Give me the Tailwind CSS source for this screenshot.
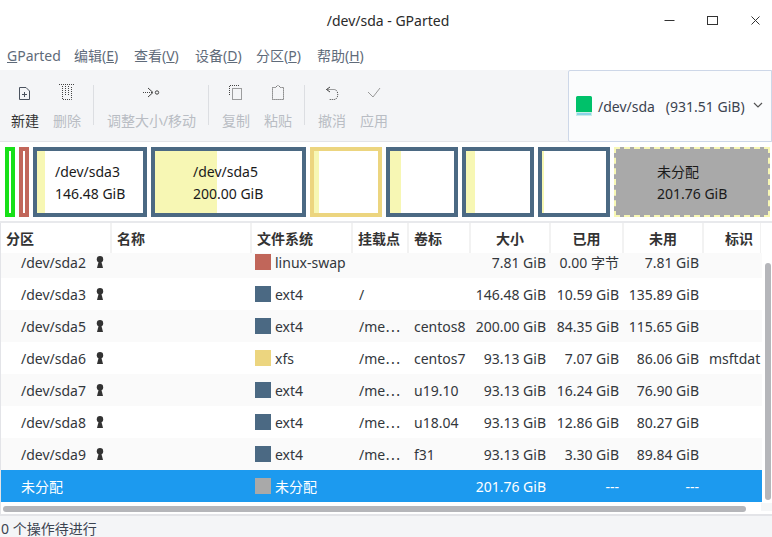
<!DOCTYPE html>
<html><head><meta charset="utf-8"><script src="https://cdn.jsdelivr.net/npm/@tailwindcss/browser@4"></script></head>
<body class="m-0 w-[772px] h-[537px] overflow-hidden bg-white text-[14px] text-[#33373c] font-['Noto_Sans','Noto_Sans_CJK_SC',sans-serif]">
<div class="flex flex-col h-[537px]">
 <div class="relative h-[38px] flex items-center justify-center pt-[3px] pl-[4px] text-[#2a2a2a]">/dev/sda - GParted
  <div class="absolute right-[11px] top-[15px] flex gap-[32px] items-center">
   <svg class="w-[11px] h-[11px]" viewBox="0 0 11 11"><path d="M0.5 5.5H10.5" stroke="#333" fill="none"/></svg>
   <svg class="w-[11px] h-[11px]" viewBox="0 0 11 11"><rect x="0.5" y="1.5" width="10" height="8" stroke="#333" fill="none"/></svg>
   <svg class="w-[11px] h-[11px]" viewBox="0 0 11 11"><path d="M1.5 1.5L9.5 9.5M9.5 1.5L1.5 9.5" stroke="#333" fill="none"/></svg>
  </div>
 </div>
 <div class="h-[32px] flex items-center pl-[7px] pt-[2px] text-[#5f6b7a]">
  <span class="w-[67px]"><u>G</u>Parted</span><span class="w-[60px]">编辑(<u>E</u>)</span><span class="w-[61px]">查看(<u>V</u>)</span><span class="w-[61px]">设备(<u>D</u>)</span><span class="w-[61px]">分区(<u>P</u>)</span><span>帮助(<u>H</u>)</span>
 </div>
 <div class="h-[72px] flex bg-[#f4f5f7] border-b border-[#e3e4e8]">
  <div class="flex-1 flex text-[#b9bdc4] pl-[4px] pt-[12px]">
   <div class="w-[42px] flex flex-col items-center text-[#333]">
    <svg class="w-[20px] h-[20px]" viewBox="0 0 20 20"><path d="M4.500 5.500H11L14.500 9V17.500H4.500Z M7 12.500H12M9.500 10V15" stroke="#4a525e" fill="none"/></svg>
    <span class="mt-[8px]">新建</span></div>
   <div class="w-[42px] flex flex-col items-center">
    <svg class="w-[20px] h-[20px]" viewBox="0 0 20 20"><path d="M2 2.500H18M5.500 4V17.500H14.500V4M8.500 4V14M11.500 4V14" stroke="#444" stroke-dasharray="1 1" fill="none"/></svg>
    <span class="mt-[8px]">删除</span></div>
   <div class="w-px h-[40px] bg-[#dcdee2] mt-[3px] ml-[5px] mr-[6px]"></div>
   <div class="w-[103px] flex flex-col items-center">
    <svg class="w-[21px] h-[20px]" viewBox="0 0 21 20"><path d="M2 10.500H12" stroke="#444" stroke-dasharray="1 1" fill="none"/><path d="M7 6L12 10.500L7 15" stroke="#444" fill="none"/><circle cx="16" cy="10.500" r="1.700" stroke="#444" fill="none"/></svg>
    <span class="mt-[8px]">调整大小/移动</span></div>
   <div class="w-px h-[40px] bg-[#dcdee2] mt-[3px] ml-[5px] mr-[6px]"></div>
   <div class="w-[42px] flex flex-col items-center">
    <svg class="w-[20px] h-[20px]" viewBox="0 0 20 20"><path d="M3.500 13V3.500H14" stroke="#444" stroke-dasharray="1 1" fill="none"/><rect x="6.500" y="6.500" width="9" height="11" stroke="#444" stroke-dasharray="1 1" fill="none"/></svg>
    <span class="mt-[8px]">复制</span></div>
   <div class="w-[42px] flex flex-col items-center">
    <svg class="w-[20px] h-[20px]" viewBox="0 0 20 20"><path d="M4.500 5.500H7.500L10 3L12.500 5.500H15.500V17.500H4.500Z" stroke="#444" stroke-dasharray="1 1" fill="none"/></svg>
    <span class="mt-[8px]">粘贴</span></div>
   <div class="w-px h-[40px] bg-[#dcdee2] mt-[3px] ml-[5px] mr-[6px]"></div>
   <div class="w-[42px] flex flex-col items-center">
    <svg class="w-[20px] h-[20px]" viewBox="0 0 20 20"><path d="M8 5L4.500 7.500L8 10" stroke="#444" fill="none"/><path d="M4.500 7.500H12C17 7.500 17 17.500 12 17.500H7" stroke="#444" stroke-dasharray="1 1" fill="none"/></svg>
    <span class="mt-[8px]">撤消</span></div>
   <div class="w-[42px] flex flex-col items-center">
    <svg class="w-[20px] h-[20px]" viewBox="0 0 20 20"><path d="M4 10L9 15L16 6" stroke="#999" fill="none"/></svg>
    <span class="mt-[8px]">应用</span></div>
  </div>
  <div class="w-[204px] h-[72px] bg-[#fbfcfd] border border-[#cdd7e8] rounded-tl-[2px] rounded-bl-[2px] flex items-center pl-[7px] text-[#3b4350]">
   <svg class="w-[16px] h-[20px] mr-[6px]" viewBox="0 0 16 20"><path d="M0 1.500A1.500 1.500 0 0 1 1.500 0H14.500A1.500 1.500 0 0 1 16 1.500V16H0Z" fill="#00c16a"/><rect y="16" width="16" height="4" fill="#c8eee8"/><rect x="1" y="17.500" width="14" height="1" fill="#4fb8e8"/></svg>
   <span class="whitespace-pre">/dev/sda   (931.51 GiB)</span>
   <svg class="w-[10px] h-[6px] ml-[8px] -mt-[3px]" viewBox="0 0 10 6"><path d="M1 1L5 5L9 1" stroke="#555" stroke-width="1.200" fill="none"/></svg>
  </div>
 </div>
 <div class="h-[81px] flex gap-[4px] pl-[5px] pt-[5px] bg-white border-b-2 border-[#e8e9ec]">
  <div class="w-[10px] h-[70px] border-[4px] border-[#18e018]"></div>
  <div class="w-[10px] h-[70px] border-[4px] border-[#c1665a]"></div>
  <div class="relative w-[114px] h-[70px] border-[4px] border-[#4b6983] flex flex-col justify-center pl-[18px] pt-[2px] text-[#1a1a1a] leading-[22px]">
   <div class="absolute left-0 top-0 bottom-0 w-[8px] bg-[#f7f7b4]"></div><span class="relative">/dev/sda3</span><span class="relative">146.48 GiB</span></div>
  <div class="relative w-[155px] h-[70px] border-[4px] border-[#4b6983] flex flex-col justify-center pl-[38px] pt-[2px] text-[#1a1a1a] leading-[22px]">
   <div class="absolute left-0 top-0 bottom-0 w-[62px] bg-[#f7f7b4]"></div><span class="relative">/dev/sda5</span><span class="relative">200.00 GiB</span></div>
  <div class="relative w-[72px] h-[70px] border-[4px] border-[#ecd57f]"><div class="absolute left-0 top-0 bottom-0 w-[5px] bg-[#f7f7b4]"></div></div>
  <div class="relative w-[72px] h-[70px] border-[4px] border-[#4b6983]"><div class="absolute left-0 top-0 bottom-0 w-[11px] bg-[#f7f7b4]"></div></div>
  <div class="relative w-[72px] h-[70px] border-[4px] border-[#4b6983]"><div class="absolute left-0 top-0 bottom-0 w-[9px] bg-[#f7f7b4]"></div></div>
  <div class="relative w-[72px] h-[70px] border-[4px] border-[#4b6983]"><div class="absolute left-0 top-0 bottom-0 w-[2px] bg-[#f7f7b4]"></div></div>
  <div class="w-[156px] h-[70px] bg-[#a9a9a9] border-2 border-dashed border-[#f7f7b4] flex flex-col justify-center pl-[41px] pt-[2px] text-[#1a1a1a] leading-[22px]"><span>未分配</span><span>201.76 GiB</span></div>
 </div>
 <div class="h-[293px] relative border-l border-b-2 border-[#e3e4e8]">
  <div class="h-[30px] w-[761px] grid grid-cols-[111px_140px_101px_56px_62px_80px_73px_80px_57px] font-bold text-[#333] bg-white items-center">
   <div class="h-full flex items-center pl-[5px] border-r-2 border-[#f2f2f2]">分区</div><div class="h-full flex items-center pl-[5px] border-r-2 border-[#f2f2f2]">名称</div><div class="h-full flex items-center pl-[5px] border-r-2 border-[#f2f2f2]">文件系统</div><div class="h-full flex items-center pl-[5px] border-r-2 border-[#f2f2f2]">挂载点</div><div class="h-full flex items-center pl-[5px] border-r-2 border-[#f2f2f2]">卷标</div><div class="h-full flex items-center justify-center border-r-2 border-[#f2f2f2]">大小</div><div class="h-full flex items-center justify-center border-r-2 border-[#f2f2f2]">已用</div><div class="h-full flex items-center justify-center border-r-2 border-[#f2f2f2]">未用</div><div class="h-full flex items-center pl-[21px] border-r border-[#f2f2f2]">标识</div>
  </div>
  <div class="h-[249px] w-[761px] overflow-hidden bg-white">
   <div class="-mt-[7px]">
    <div class="h-[32px] bg-[#fafafa] grid grid-cols-[111px_140px_101px_56px_62px_80px_73px_80px_57px] items-center"><div class="flex items-center pl-[20px]">/dev/sda2<svg class="w-[8px] h-[12px] ml-[10px] -mt-[1px]" viewBox="0 0 8 12"><circle cx="4" cy="3.200" r="3.200" fill="#333"/><path d="M2.800 5H5.200L7 12H1Z" fill="#333"/></svg></div><div></div><div class="flex items-center pl-[3px]"><span class="w-[16px] h-[16px] bg-[#c1665a] mr-[4px]"></span>linux-swap</div><div class="pl-[6px]"></div><div class="pl-[5px]"></div><div class="text-right pr-[5px]">7.81 GiB</div><div class="text-right pr-[5px]">0.00 字节</div><div class="text-right pr-[5px]">7.81 GiB</div><div class="pl-[5px]"></div></div>
    <div class="h-[32px] bg-white grid grid-cols-[111px_140px_101px_56px_62px_80px_73px_80px_57px] items-center"><div class="flex items-center pl-[20px]">/dev/sda3<svg class="w-[8px] h-[12px] ml-[10px] -mt-[1px]" viewBox="0 0 8 12"><circle cx="4" cy="3.200" r="3.200" fill="#333"/><path d="M2.800 5H5.200L7 12H1Z" fill="#333"/></svg></div><div></div><div class="flex items-center pl-[3px]"><span class="w-[16px] h-[16px] bg-[#4b6983] mr-[4px]"></span>ext4</div><div class="pl-[6px]">/</div><div class="pl-[5px]"></div><div class="text-right pr-[5px]">146.48 GiB</div><div class="text-right pr-[5px]">10.59 GiB</div><div class="text-right pr-[5px]">135.89 GiB</div><div class="pl-[5px]"></div></div>
    <div class="h-[32px] bg-[#fafafa] grid grid-cols-[111px_140px_101px_56px_62px_80px_73px_80px_57px] items-center"><div class="flex items-center pl-[20px]">/dev/sda5<svg class="w-[8px] h-[12px] ml-[10px] -mt-[1px]" viewBox="0 0 8 12"><circle cx="4" cy="3.200" r="3.200" fill="#333"/><path d="M2.800 5H5.200L7 12H1Z" fill="#333"/></svg></div><div></div><div class="flex items-center pl-[3px]"><span class="w-[16px] h-[16px] bg-[#4b6983] mr-[4px]"></span>ext4</div><div class="pl-[6px]">/me⋯</div><div class="pl-[5px]">centos8</div><div class="text-right pr-[5px]">200.00 GiB</div><div class="text-right pr-[5px]">84.35 GiB</div><div class="text-right pr-[5px]">115.65 GiB</div><div class="pl-[5px]"></div></div>
    <div class="h-[32px] bg-white grid grid-cols-[111px_140px_101px_56px_62px_80px_73px_80px_57px] items-center"><div class="flex items-center pl-[20px]">/dev/sda6<svg class="w-[8px] h-[12px] ml-[10px] -mt-[1px]" viewBox="0 0 8 12"><circle cx="4" cy="3.200" r="3.200" fill="#333"/><path d="M2.800 5H5.200L7 12H1Z" fill="#333"/></svg></div><div></div><div class="flex items-center pl-[3px]"><span class="w-[16px] h-[16px] bg-[#ecd57f] mr-[4px]"></span>xfs</div><div class="pl-[6px]">/me⋯</div><div class="pl-[5px]">centos7</div><div class="text-right pr-[5px]">93.13 GiB</div><div class="text-right pr-[5px]">7.07 GiB</div><div class="text-right pr-[5px]">86.06 GiB</div><div class="pl-[5px] whitespace-nowrap overflow-hidden">msftdat</div></div>
    <div class="h-[32px] bg-[#fafafa] grid grid-cols-[111px_140px_101px_56px_62px_80px_73px_80px_57px] items-center"><div class="flex items-center pl-[20px]">/dev/sda7<svg class="w-[8px] h-[12px] ml-[10px] -mt-[1px]" viewBox="0 0 8 12"><circle cx="4" cy="3.200" r="3.200" fill="#333"/><path d="M2.800 5H5.200L7 12H1Z" fill="#333"/></svg></div><div></div><div class="flex items-center pl-[3px]"><span class="w-[16px] h-[16px] bg-[#4b6983] mr-[4px]"></span>ext4</div><div class="pl-[6px]">/me⋯</div><div class="pl-[5px]">u19.10</div><div class="text-right pr-[5px]">93.13 GiB</div><div class="text-right pr-[5px]">16.24 GiB</div><div class="text-right pr-[5px]">76.90 GiB</div><div class="pl-[5px]"></div></div>
    <div class="h-[32px] bg-white grid grid-cols-[111px_140px_101px_56px_62px_80px_73px_80px_57px] items-center"><div class="flex items-center pl-[20px]">/dev/sda8<svg class="w-[8px] h-[12px] ml-[10px] -mt-[1px]" viewBox="0 0 8 12"><circle cx="4" cy="3.200" r="3.200" fill="#333"/><path d="M2.800 5H5.200L7 12H1Z" fill="#333"/></svg></div><div></div><div class="flex items-center pl-[3px]"><span class="w-[16px] h-[16px] bg-[#4b6983] mr-[4px]"></span>ext4</div><div class="pl-[6px]">/me⋯</div><div class="pl-[5px]">u18.04</div><div class="text-right pr-[5px]">93.13 GiB</div><div class="text-right pr-[5px]">12.86 GiB</div><div class="text-right pr-[5px]">80.27 GiB</div><div class="pl-[5px]"></div></div>
    <div class="h-[32px] bg-[#fafafa] grid grid-cols-[111px_140px_101px_56px_62px_80px_73px_80px_57px] items-center"><div class="flex items-center pl-[20px]">/dev/sda9<svg class="w-[8px] h-[12px] ml-[10px] -mt-[1px]" viewBox="0 0 8 12"><circle cx="4" cy="3.200" r="3.200" fill="#333"/><path d="M2.800 5H5.200L7 12H1Z" fill="#333"/></svg></div><div></div><div class="flex items-center pl-[3px]"><span class="w-[16px] h-[16px] bg-[#4b6983] mr-[4px]"></span>ext4</div><div class="pl-[6px]">/me⋯</div><div class="pl-[5px]">f31</div><div class="text-right pr-[5px]">93.13 GiB</div><div class="text-right pr-[5px]">3.30 GiB</div><div class="text-right pr-[5px]">89.84 GiB</div><div class="pl-[5px]"></div></div>
    <div class="h-[32px] grid grid-cols-[111px_140px_101px_56px_62px_80px_73px_80px_57px] items-center bg-[#1c9aef] text-white"><div class="pl-[20px]">未分配</div><div></div><div class="flex items-center pl-[3px]"><span class="w-[16px] h-[16px] bg-[#a9a9a9] mr-[4px]"></span>未分配</div><div></div><div></div><div class="text-right pr-[5px]">201.76 GiB</div><div class="text-right pr-[5px]">---</div><div class="text-right pr-[5px]">---</div><div></div></div>
   </div>
  </div>
  <div class="absolute left-[2px] top-[283px] w-[743px] h-[6px] rounded-full bg-[#b5b6ba]"></div>
  <div class="absolute left-[764px] top-[40px] w-[6px] h-[237px] rounded-full bg-[#b5b6ba]"></div>
  <div class="absolute left-[760px] top-[280px] w-[11px] h-[8px] bg-[#f5f6f7]"></div>
 </div>
 <div class="h-[21px] bg-[#f4f5f7] flex items-center pt-[4px] pl-px text-[#3b4350]">0 个操作待进行</div>
</div>
</body></html>
